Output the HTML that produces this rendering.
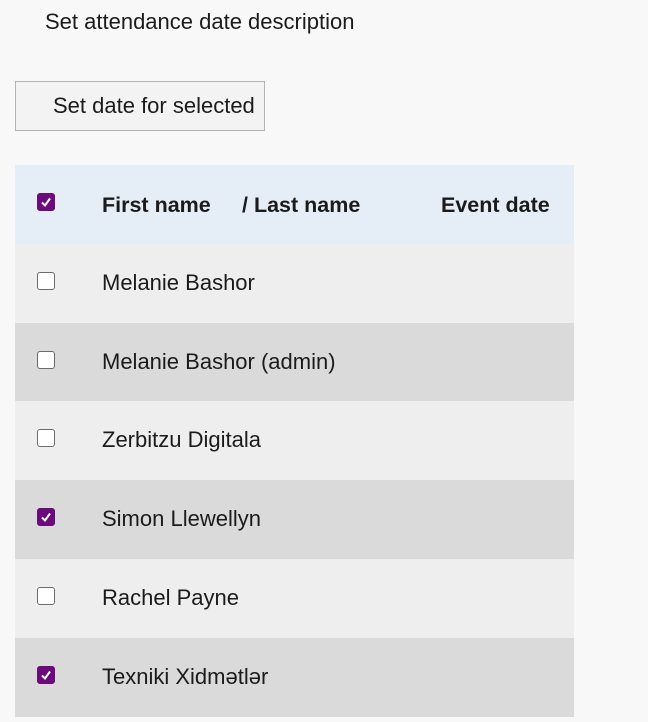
<!DOCTYPE html>
<html><head><style>
body{margin:0;background:#f8f8f8;font-family:"Liberation Sans",sans-serif;color:#1b1b1b;width:648px;height:722px;overflow:hidden;position:relative}
.t{position:absolute;left:45px;top:9px;font-size:22px}
.btn{position:absolute;left:15px;top:81px;width:248px;height:48px;border:1px solid #b3b3b3;background:#f3f3f3;box-sizing:content-box}
.btn span{position:absolute;left:37px;top:11px;font-size:22px}
.row{position:absolute;left:15px;width:559px;height:79px}
.cb{position:absolute;left:22px;top:28px;width:18px;height:18px;border:1px solid #6b6b6b;border-radius:3px;background:#fff;box-sizing:border-box}
.cb.on{background:#6b0b7b;border-color:#6b0b7b}
.cb.on svg{position:absolute;left:2px;top:2px}
.txt{position:absolute;left:87px;top:26px;font-size:22px}
.h{font-weight:bold;font-size:21.5px;top:28px}
</style></head><body>
<div class="t">Set attendance date description</div>
<div class="btn"><span>Set date for selected</span></div>
<div class="row" style="top:165px;background:#e5edf6">
<div class="cb on"><svg width="12" height="12" viewBox="0 0 12 12"><path d="M2 6.5 L5 9.5 L10 2.5" stroke="#fff" stroke-width="2" fill="none"/></svg></div>
<div class="txt h">First name</div><div class="txt h" style="left:227px">/ Last name</div><div class="txt h" style="left:426px">Event date</div></div>
<div class="row" style="top:244px;background:#eeeeee"><div class="cb"></div><div class="txt">Melanie Bashor</div></div>
<div class="row" style="top:323px;background:#dadada"><div class="cb"></div><div class="txt">Melanie Bashor (admin)</div></div>
<div class="row" style="top:401px;background:#eeeeee"><div class="cb"></div><div class="txt">Zerbitzu Digitala</div></div>
<div class="row" style="top:480px;background:#dadada"><div class="cb on"><svg width="12" height="12" viewBox="0 0 12 12"><path d="M2 6.5 L5 9.5 L10 2.5" stroke="#fff" stroke-width="2" fill="none"/></svg></div><div class="txt">Simon Llewellyn</div></div>
<div class="row" style="top:559px;background:#eeeeee"><div class="cb"></div><div class="txt">Rachel Payne</div></div>
<div class="row" style="top:638px;background:#dadada"><div class="cb on"><svg width="12" height="12" viewBox="0 0 12 12"><path d="M2 6.5 L5 9.5 L10 2.5" stroke="#fff" stroke-width="2" fill="none"/></svg></div><div class="txt">Texniki Xidmətlər</div></div>
</body></html>
